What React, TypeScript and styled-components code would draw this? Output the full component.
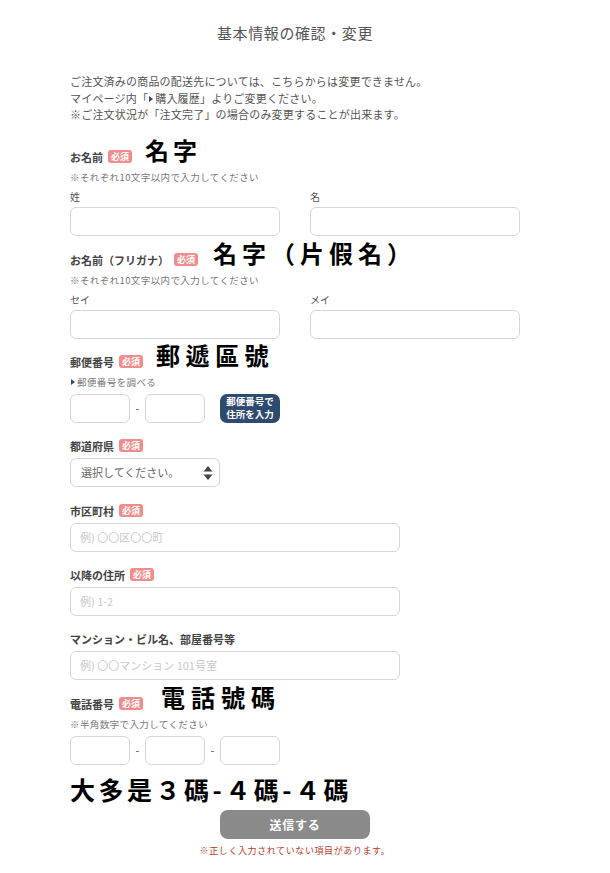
import React from "react";
import styled, { createGlobalStyle } from "styled-components";

const Global = createGlobalStyle`
  html, body { margin: 0; padding: 0; background: #fff; }
  body { font-family: "Noto Sans CJK JP", "Noto Sans", sans-serif; color: #555; }
  * { box-sizing: border-box; }
`;

const Page = styled.div`
  width: 450px;
  margin-left: 70px;
  padding-top: 24px;
  padding-bottom: 20px;
`;

const Title = styled.h1`
  margin: 0;
  text-align: center;
  font-size: 15px;
  font-weight: 400;
  line-height: 18px;
  color: #555;
  letter-spacing: 0.6px;
`;

const Intro = styled.p`
  margin: 31px 0 0;
  font-size: 11px;
  line-height: 16.5px;
  color: #555;
  letter-spacing: 0.2px;
`;

const Tri = styled.span`
  display: inline-block;
  width: 0;
  height: 0;
  border-top: 3.5px solid transparent;
  border-bottom: 3.5px solid transparent;
  border-left: 4px solid #2d4a6f;
  margin: 0 2px 0 1px;
  vertical-align: 1px;
`;

const Field = styled.div<{ $mt?: number }>`
  margin-top: ${(p) => (p.$mt ?? 15)}px;
`;

const LabelRow = styled.div`
  display: flex;
  align-items: center;
  gap: 5px;
  height: 16px;
`;

const Label = styled.span`
  font-size: 11px;
  font-weight: 700;
  color: #444;
  line-height: 16px;
`;

const Badge = styled.span`
  display: inline-block;
  background: #f28c8c;
  color: #fff;
  font-size: 9px;
  font-weight: 700;
  line-height: 13px;
  padding: 0 3px;
  border-radius: 3px;
`;

const Note = styled.span<{ $ml?: number; $ls?: number }>`
  font-family: "Noto Sans CJK JP", sans-serif;
  font-size: 24px;
  font-weight: 700;
  color: #000;
  letter-spacing: ${(p) => p.$ls ?? 4}px;
  line-height: 16px;
  margin-left: ${(p) => p.$ml ?? 8}px;
  margin-bottom: 14px;
  white-space: nowrap;
`;

const Hint = styled.div<{ $mt?: number }>`
  margin-top: ${(p) => p.$mt ?? 4}px;
  font-size: 9.5px;
  line-height: 16px;
  color: #777;
  letter-spacing: 0.4px;
`;

const Cols = styled.div`
  display: grid;
  grid-template-columns: 210px 210px;
  column-gap: 30px;
  margin-top: 4px;
`;

const Col = styled.div`
  display: flex;
  flex-direction: column;
`;

const SubLabel = styled.div`
  font-size: 10px;
  line-height: 16px;
  color: #555;
  margin-bottom: 2px;
`;

const Input = styled.input<{ $w?: number }>`
  display: block;
  width: ${(p) => (p.$w ? `${p.$w}px` : "100%")};
  height: 29px;
  border: 1px solid #d6d6d6;
  border-radius: 6px;
  background: #fff;
  padding: 0 9px;
  font-family: inherit;
  font-size: 11px;
  color: #333;
  outline: none;
  &::placeholder { color: #c8c8c8; }
`;

const InputWrap = styled.div`
  margin-top: 4px;
`;

const Inline = styled.div<{ $mt?: number }>`
  display: flex;
  align-items: center;
  margin-top: ${(p) => p.$mt ?? 4}px;
`;

const Dash = styled.span`
  width: 15px;
  text-align: center;
  font-size: 11px;
  color: #555;
`;

const AddrButton = styled.button`
  margin-left: 15px;
  width: 60px;
  height: 29px;
  border: none;
  border-radius: 7px;
  background: #2d4a6f;
  color: #fff;
  font-family: inherit;
  font-size: 9.5px;
  font-weight: 700;
  line-height: 13px;
  padding: 0;
`;

const SelectBox = styled.div`
  position: relative;
  width: 150px;
  height: 29px;
  margin-top: 4px;
  border: 1px solid #d6d6d6;
  border-radius: 6px;
  display: flex;
  align-items: center;
  padding-left: 10px;
  font-size: 11px;
  color: #666;
`;

const Arrows = styled.svg`
  position: absolute;
  right: 6px;
  top: 7px;
`;

const BigNote = styled.div`
  margin-top: 8px;
  font-size: 25px;
  font-weight: 700;
  color: #000;
  letter-spacing: 3.5px;
  line-height: 32px;
  white-space: nowrap;
`;

const Submit = styled.button`
  display: block;
  margin: 5px auto 0;
  width: 150px;
  height: 29px;
  border: none;
  border-radius: 8px;
  background: #8a8a8a;
  color: #fff;
  font-family: inherit;
  font-size: 12px;
  font-weight: 700;
  letter-spacing: 0.8px;
`;

const ErrorText = styled.div`
  margin-top: 5px;
  text-align: center;
  font-size: 9px;
  line-height: 14px;
  color: #c0392b;
  letter-spacing: 0.6px;
`;

const Req = () => <Badge>必須</Badge>;

export default function App() {
  return (
    <>
      <Global />
      <Page>
        <Title>基本情報の確認・変更</Title>
        <Intro>
          ご注文済みの商品の配送先については、こちらからは変更できません。
          <br />
          マイページ内「<Tri />購入履歴」よりご変更ください。
          <br />
          ※ご注文状況が「注文完了」の場合のみ変更することが出来ます。
        </Intro>

        <Field $mt={26}>
          <LabelRow>
            <Label>お名前</Label>
            <Req />
            <Note>名字</Note>
          </LabelRow>
          <Hint>※それぞれ10文字以内で入力してください</Hint>
          <Cols>
            <Col>
              <SubLabel>姓</SubLabel>
              <Input />
            </Col>
            <Col>
              <SubLabel>名</SubLabel>
              <Input />
            </Col>
          </Cols>
        </Field>

        <Field $mt={16}>
          <LabelRow>
            <Label>お名前（フリガナ）</Label>
            <Req />
            <Note $ml={10} $ls={5}>名字（片假名）</Note>
          </LabelRow>
          <Hint>※それぞれ10文字以内で入力してください</Hint>
          <Cols>
            <Col>
              <SubLabel>セイ</SubLabel>
              <Input />
            </Col>
            <Col>
              <SubLabel>メイ</SubLabel>
              <Input />
            </Col>
          </Cols>
        </Field>

        <Field>
          <LabelRow>
            <Label>郵便番号</Label>
            <Req />
            <Note $ls={5.5}>郵遞區號</Note>
          </LabelRow>
          <Hint>
            <Tri />
            郵便番号を調べる
          </Hint>
          <Inline>
            <Input $w={60} />
            <Dash>-</Dash>
            <Input $w={60} />
            <AddrButton>
              郵便番号で
              <br />
              住所を入力
            </AddrButton>
          </Inline>
        </Field>

        <Field>
          <LabelRow>
            <Label>都道府県</Label>
            <Req />
          </LabelRow>
          <SelectBox>
            選択してください。
            <Arrows width="10" height="14" viewBox="0 0 10 14">
              <path d="M5 0 L9.5 5.5 L0.5 5.5 Z" fill="#444" />
              <path d="M5 14 L9.5 8.5 L0.5 8.5 Z" fill="#444" />
            </Arrows>
          </SelectBox>
        </Field>

        <Field $mt={16}>
          <LabelRow>
            <Label>市区町村</Label>
            <Req />
          </LabelRow>
          <InputWrap>
            <Input $w={330} placeholder="例) 〇〇区〇〇町" />
          </InputWrap>
        </Field>

        <Field>
          <LabelRow>
            <Label>以降の住所</Label>
            <Req />
          </LabelRow>
          <InputWrap>
            <Input $w={330} placeholder="例) 1-2" />
          </InputWrap>
        </Field>

        <Field>
          <LabelRow>
            <Label>マンション・ビル名、部屋番号等</Label>
          </LabelRow>
          <InputWrap>
            <Input $w={330} placeholder="例) 〇〇マンション 101号室" />
          </InputWrap>
        </Field>

        <Field $mt={16}>
          <LabelRow>
            <Label>電話番号</Label>
            <Req />
            <Note $ml={13} $ls={6}>電話號碼</Note>
          </LabelRow>
          <Hint>※半角数字で入力してください</Hint>
          <Inline>
            <Input $w={60} />
            <Dash>-</Dash>
            <Input $w={60} />
            <Dash>-</Dash>
            <Input $w={60} />
          </Inline>
        </Field>

        <BigNote>大多是３碼-４碼-４碼</BigNote>
        <Submit>送信する</Submit>
        <ErrorText>※正しく入力されていない項目があります。</ErrorText>
      </Page>
    </>
  );
}
